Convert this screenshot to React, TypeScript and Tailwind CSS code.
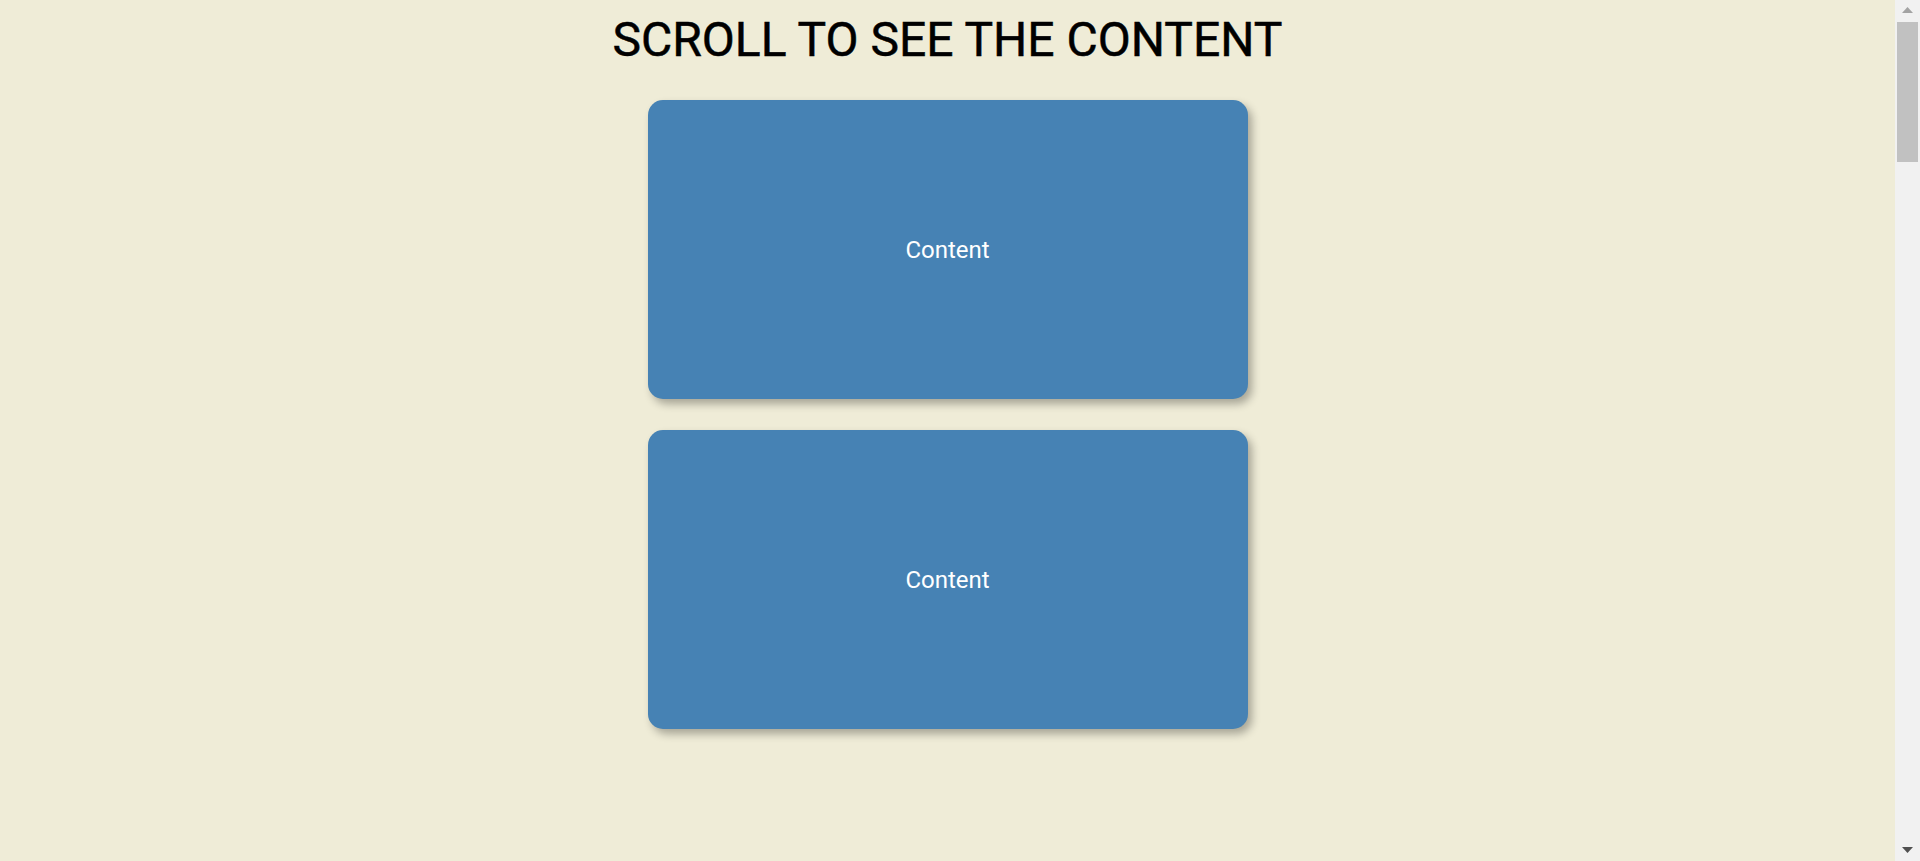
import React from 'react'

const cards = ['Content', 'Content']

function Scrollbar() {
  return (
    <aside className="flex h-full w-[25px] shrink-0 flex-col items-center bg-[#f1f1f1]">
      <svg className="mt-[7px]" width="11" height="6" viewBox="0 0 11 6">
        <polygon points="5.5,0 11,6 0,6" fill="#a3a3a3" />
      </svg>
      <div className="mt-[9px] h-[140px] w-[21px] bg-[#c1c1c1]" />
      <div className="flex-1" />
      <svg className="mb-[8px]" width="11" height="6" viewBox="0 0 11 6">
        <polygon points="0,0 11,0 5.5,6" fill="#505050" />
      </svg>
    </aside>
  )
}

export default function App() {
  return (
    <div
      className="flex h-[861px] overflow-hidden bg-[#efecd7]"
      style={{ fontFamily: 'Roboto, "Noto Sans", sans-serif' }}
    >
      <main className="flex min-w-0 flex-1 flex-col items-center">
        <h1 className="pt-3 text-center text-[48px] leading-[56px] font-normal text-black [-webkit-text-stroke:0.5px_black]">
          SCROLL TO SEE THE CONTENT
        </h1>
        <div className="mt-8 flex flex-col items-center gap-[31px]">
          {cards.map((label, i) => (
            <div
              key={i}
              className="flex h-[299px] w-[600px] items-center justify-center rounded-[15px] bg-[#4682b4] text-2xl text-white shadow-[4px_5px_8px_rgba(0,0,0,0.3)]"
            >
              {label}
            </div>
          ))}
        </div>
      </main>
      <Scrollbar />
    </div>
  )
}
